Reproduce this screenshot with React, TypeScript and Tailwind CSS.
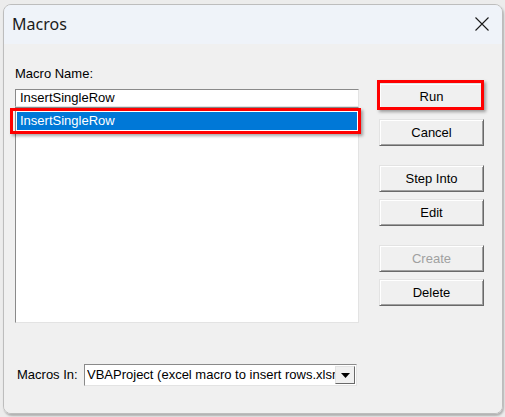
import React from 'react';

const ui = { fontFamily: '"Liberation Sans", Arial, sans-serif' };

function Btn({ label, disabled, className = '' }: { label: string; disabled?: boolean; className?: string }) {
  return (
    <div
      className={`h-[27px] w-[105px] flex items-center justify-center bg-[#f0f0f0] border border-t-[#e3e3e3] border-l-[#e3e3e3] border-b-[#696969] border-r-[#696969] shadow-[inset_1px_1px_0_#ffffff,inset_-1px_-1px_0_#a0a0a0] text-[13px] ${disabled ? 'text-[#a0a0a0]' : 'text-black'} ${className}`}
    >
      {label}
    </div>
  );
}

export default function App() {
  return (
    <div className="relative w-[505px] h-[417px] bg-[#ececec] overflow-hidden" style={ui}>
      <div className="ml-[3px] mt-[4px] w-[500px] h-[410px] flex flex-col rounded-[8px] border border-[#bdbdbd] overflow-hidden shadow-[1px_2px_2px_rgba(0,0,0,0.25)]">
        {/* title bar */}
        <div className="h-[39px] shrink-0 bg-[#eff3f9] flex items-center justify-between pl-[8px] pr-[13px]">
          <span className="text-[16px] text-[#1b1b1b] pb-[1px]" style={{ fontFamily: '"Noto Sans", "Open Sans", sans-serif' }}>
            Macros
          </span>
          <svg width="14" height="14" viewBox="0 0 14 14" className="mb-[1px]">
            <path d="M0.5 0.5 L13.5 13.5 M13.5 0.5 L0.5 13.5" stroke="#1a1a1a" strokeWidth="1.1" fill="none" />
          </svg>
        </div>

        {/* body */}
        <div className="flex-1 bg-[#f0f0f0] pl-[11px]">
          <div className="flex">
            <div className="w-[344px] flex flex-col">
              <div className="mt-[22px] h-[16px] text-[13px] text-black leading-[16px]">Macro Name:</div>
              <div className="mt-[7px] h-[18px] bg-white border border-t-[#8a8a8a] border-l-[#8a8a8a] border-b-[#e3e3e3] border-r-[#e3e3e3] flex items-center pl-[4px] text-[13px] text-black">
                InsertSingleRow
              </div>
              <div className="h-[216px] bg-white border border-t-[#8a8a8a] border-l-[#8a8a8a] border-b-[#e3e3e3] border-r-[#e3e3e3] pt-[4px] px-[1px]">
                <div className="h-[18px] bg-[#0078d7] text-white text-[13px] flex items-center pl-[3px]">InsertSingleRow</div>
              </div>
              <div className="mt-[41px] flex items-center">
                <span className="ml-[2px] w-[67px] text-[13px] text-black">Macros In:</span>
                <div className="w-[273px] h-[22px] bg-white border border-t-[#8a8a8a] border-l-[#8a8a8a] border-b-[#e3e3e3] border-r-[#e3e3e3] flex items-center pl-[2px] pr-[1px]">
                  <span className="flex-1 overflow-hidden whitespace-nowrap text-[13px] text-black">
                    VBAProject (excel macro to insert rows.xlsm)
                  </span>
                  <div className="w-[20px] h-[18px] shrink-0 bg-[#f0f0f0] border border-t-[#e3e3e3] border-l-[#e3e3e3] border-b-[#696969] border-r-[#696969] flex items-center justify-center">
                    <svg width="9" height="5" viewBox="0 0 9 5">
                      <path d="M0 0 H9 L4.5 5 Z" fill="#000" />
                    </svg>
                  </div>
                </div>
              </div>
            </div>

            <div className="ml-[20px] flex flex-col">
              <Btn label="Run" className="mt-[39px]" />
              <Btn label="Cancel" className="mt-[9px]" />
              <Btn label="Step Into" className="mt-[19px]" />
              <Btn label="Edit" className="mt-[7px]" />
              <Btn label="Create" disabled className="mt-[19px]" />
              <Btn label="Delete" className="mt-[7px]" />
            </div>
          </div>
        </div>
      </div>

      {/* red annotation boxes */}
      <div className="absolute left-[10px] top-[108px] w-[351px] h-[26px] border-[3px] border-[#ff0000] shadow-[2px_2px_3px_rgba(0,0,0,0.35)]" />
      <div className="absolute left-[377px] top-[80px] w-[107px] h-[30px] border-[3px] border-[#ff0000] shadow-[2px_2px_3px_rgba(0,0,0,0.35)]" />
    </div>
  );
}
